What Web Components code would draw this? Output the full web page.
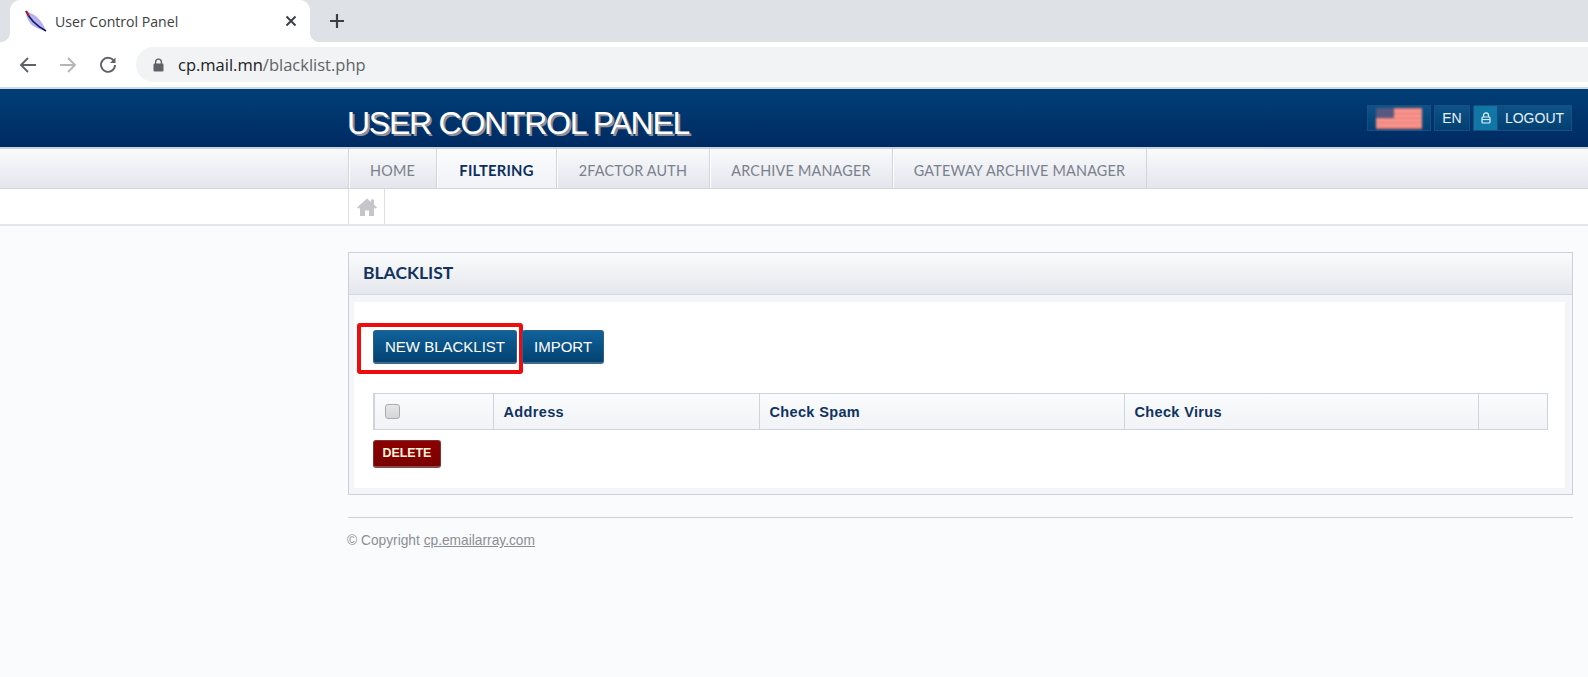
<!DOCTYPE html>
<html>
<head>
<meta charset="utf-8">
<title>User Control Panel</title>
<style>
    html, body { margin: 0; height: 100%; }
    body {
        display: flex;
        flex-direction: column;
        background: #fafbfd;
        font-family: "Liberation Sans", Arial, sans-serif;
        overflow: hidden;
    }
</style>
</head>
<body>
<browser-chrome title-text="User Control Panel" host-text="cp.mail.mn" path-text="/blacklist.php"></browser-chrome>
<cp-header></cp-header>
<cp-nav></cp-nav>
<cp-breadcrumb></cp-breadcrumb>
<cp-page>
    <cp-panel heading="BLACKLIST">
        <div style="display:flex;gap:5px;">
            <cp-button marked>NEW BLACKLIST</cp-button>
            <cp-button>IMPORT</cp-button>
        </div>
        <blacklist-table></blacklist-table>
        <cp-button danger>DELETE</cp-button>
    </cp-panel>
    <cp-footer></cp-footer>
</cp-page>

<script>
class BrowserChrome extends HTMLElement {
    constructor() {
        super();
        this.attachShadow({ mode: 'open' });
    }

    connectedCallback() {
        this.shadowRoot.innerHTML = `
            <style>
                :host {
                    display: block;
                    font-family: "Open Sans", "Noto Sans", sans-serif;
                    color: #3c4043;
                }
                .strip {
                    height: 42px;
                    background: #dee1e6;
                    display: flex;
                    padding-left: 10px;
                    box-sizing: border-box;
                }
                .tab {
                    width: 300px;
                    height: 42px;
                    background: #fff;
                    border-radius: 10px 10px 0 0;
                    display: flex;
                    align-items: center;
                    padding: 0 13px 0 15px;
                    box-sizing: border-box;
                    font-size: 14.1px;
                    position: relative;
                }
                .tab::before, .tab::after {
                    content: '';
                    position: absolute;
                    bottom: 0;
                    width: 10px;
                    height: 10px;
                }
                .tab::before {
                    left: -10px;
                    background: radial-gradient(circle at 0 0, transparent 10px, #fff 10.5px);
                }
                .tab::after {
                    right: -10px;
                    background: radial-gradient(circle at 100% 0, transparent 10px, #fff 10.5px);
                }
                .tab svg.fav { margin-right: 8px; flex: none; }
                .tab span { flex: 1; }
                .plus { margin: 13px 0 0 19px; }
                .bar {
                    height: 45px;
                    background: #fff;
                    display: flex;
                    align-items: center;
                    padding-left: 19px;
                    box-sizing: border-box;
                }
                .bar > svg { flex: none; }
                .omni {
                    flex: 1;
                    height: 35px;
                    margin-left: 19px;
                    background: #f1f3f4;
                    border-radius: 18px 0 0 18px;
                    display: flex;
                    align-items: center;
                    padding-left: 17px;
                    font-size: 16.5px;
                }
                .omni svg { margin-right: 14px; }
                .omni b { font-weight: 400; color: #202124; }
                .omni i { font-style: normal; color: #5f6368; }
                .rule { height: 2px; background: #d3dae2; }
            </style>
            <div class="strip">
                <div class="tab">
                    <svg class="fav" width="22" height="22" viewBox="0 0 22 22">
                        <path d="M1 1 C3 2 9 4 13 8 C16 11 19 15 21 21 C14 19 8 17 5 13 C2 9 1 5 1 1Z" fill="#b4b3ee"/>
                        <path d="M1 1 C4 8 10 15 21 21" stroke="#15156b" stroke-width="1.7" fill="none"/>
                        <path d="M1 1 L4 6" stroke="#b3152c" stroke-width="1.8"/>
                    </svg>
                    <span>${this.getAttribute('title-text')}</span>
                    <svg width="12" height="12" viewBox="0 0 12 12"><path d="M1.5 1.5 L10.5 10.5 M10.5 1.5 L1.5 10.5" stroke="#3c4043" stroke-width="2"/></svg>
                </div>
                <svg class="plus" width="16" height="16" viewBox="0 0 16 16"><path d="M8 1 V15 M1 8 H15" stroke="#3c4043" stroke-width="2.2"/></svg>
            </div>
            <div class="bar">
                <svg width="18" height="18" viewBox="0 0 18 18"><path d="M17 9 H2 M9 2 L2 9 L9 16" stroke="#5f6368" stroke-width="1.9" fill="none"/></svg>
                <svg style="margin-left:22px" width="18" height="18" viewBox="0 0 18 18"><path d="M1 9 H16 M9 2 L16 9 L9 16" stroke="#b4b6b9" stroke-width="1.9" fill="none"/></svg>
                <svg style="margin-left:22px" width="18" height="18" viewBox="0 0 18 18"><path d="M15 5.2 A7 7 0 1 0 16 9" stroke="#5f6368" stroke-width="1.9" fill="none"/><path d="M16.5 1.5 V7 H11Z" fill="#5f6368"/></svg>
                <div class="omni">
                    <svg width="11" height="14" viewBox="0 0 11 14"><path d="M2.6 6 V4 A2.9 2.9 0 0 1 8.4 4 V6" stroke="#5f6368" stroke-width="1.4" fill="none"/><rect x="0.5" y="5.5" width="10" height="8" rx="1.2" fill="#5f6368"/></svg>
                    <b>${this.getAttribute('host-text')}</b><i>${this.getAttribute('path-text')}</i>
                </div>
            </div>
            <div class="rule"></div>
        `;
    }
}

class CpHeader extends HTMLElement {
    constructor() {
        super();
        this.attachShadow({ mode: 'open' });
        this.shadowRoot.innerHTML = `
            <style>
                :host {
                    display: block;
                    height: 58px;
                    background: linear-gradient(#003f76, #002a62);
                    color: #fff;
                    font-family: "Liberation Sans", Arial, sans-serif;
                    position: relative;
                    border-bottom: 2px solid #c9d2dd;
                }
                .title {
                    position: absolute;
                    left: 347px;
                    top: 15px;
                    font-size: 32px;
                    line-height: 38px;
                    letter-spacing: -1.25px;
                    text-shadow: 2px 2px 0 #8f9099;
                    white-space: nowrap;
                }
                .tools {
                    position: absolute;
                    right: 16px;
                    top: 16px;
                    display: flex;
                    gap: 3px;
                    font-size: 14px;
                }
                .tool {
                    height: 26px;
                    box-sizing: border-box;
                    padding-bottom: 1px;
                    border: 1px solid #174f83;
                    background: linear-gradient(#0d5288, #034071);
                    display: flex;
                    align-items: center;
                    justify-content: center;
                    color: #e8f1f8;
                }
                .flag { width: 64px; padding-bottom: 0; }
                .flag svg { filter: blur(1.1px); }
                .en { width: 36px; }
                .logout { display: flex; width: 99px; padding-bottom: 0; }
                .logout .lock {
                    width: 23px;
                    height: 100%;
                    background: #0f76a6;
                    display: flex;
                    align-items: center;
                    justify-content: center;
                    border-right: 1px solid #174f83;
                }
                .logout span { flex: 1; text-align: center; padding-bottom: 1px; }
            </style>
            <div class="title">USER CONTROL PANEL</div>
            <div class="tools">
                <div class="tool flag">
                    <svg width="46" height="21" viewBox="0 0 46 21">
                        <rect width="46" height="21" fill="#f4837c"/>
                        <path d="M0 3.5 H46 M0 8 H46 M0 12.5 H46 M0 17 H46" stroke="#f3a89f" stroke-width="1.4"/>
                        <rect width="18" height="10" fill="#57587f"/>
                    </svg>
                </div>
                <div class="tool en">EN</div>
                <div class="tool logout">
                    <div class="lock">
                        <svg width="10" height="12" viewBox="0 0 10 12"><path d="M2.5 5 V3.4 A2.5 2.5 0 0 1 7.5 3.4 V5" stroke="#e3f2fa" stroke-width="1.2" fill="none"/><rect x="1" y="5" width="8" height="6" rx="1" fill="none" stroke="#e3f2fa" stroke-width="1.2"/><path d="M1 7.6 H9" stroke="#e3f2fa"/></svg>
                    </div>
                    <span>LOGOUT</span>
                </div>
            </div>
        `;
    }
}

class CpNav extends HTMLElement {
    constructor() {
        super();
        this.attachShadow({ mode: 'open' });
        const items = [
            ['HOME', 88], ['FILTERING', 120], ['2FACTOR AUTH', 153],
            ['ARCHIVE MANAGER', 183], ['GATEWAY ARCHIVE MANAGER', 255]
        ];
        this.shadowRoot.innerHTML = `
            <style>
                :host {
                    display: flex;
                    height: 39px;
                    padding-left: 348px;
                    background: linear-gradient(#f9fafc, #e3e6ec);
                    border-bottom: 1px solid #cfd6df;
                    font-family: Lato, "Open Sans", sans-serif;
                    font-size: 14.4px;
                    color: #7b808c;
                }
                a {
                    display: flex;
                    align-items: center;
                    justify-content: center;
                    box-sizing: border-box;
                    padding-top: 3px;
                    border-left: 1px solid #cfd6df;
                    box-shadow: inset 1px 0 0 #fff;
                    letter-spacing: 0.2px;
                    white-space: nowrap;
                }
                a:last-child { border-right: 1px solid #cfd6df; }
                a.on {
                    color: #0d2f5e;
                    font-weight: 700;
                    font-size: 14.8px;
                    background: linear-gradient(#fbfcfd, #f0f2f6);
                }
            </style>
            ${items.map(([label, w]) => `<a class="${label === 'FILTERING' ? 'on' : ''}" style="width:${w}px">${label}</a>`).join('')}
        `;
    }
}

class CpBreadcrumb extends HTMLElement {
    constructor() {
        super();
        this.attachShadow({ mode: 'open' });
        this.shadowRoot.innerHTML = `
            <style>
                :host {
                    display: flex;
                    height: 35px;
                    padding-left: 348px;
                    background: #fff;
                    border-bottom: 2px solid #e3e6ec;
                }
                div {
                    width: 37px;
                    box-sizing: border-box;
                    border-left: 1px solid #dcdfe5;
                    border-right: 1px solid #dcdfe5;
                    display: flex;
                    align-items: center;
                    justify-content: center;
                }
            </style>
            <div>
                <svg width="20" height="18" viewBox="0 0 20 18">
                    <path d="M10 .5 L14 4 V1.5 H17 V6.6 L20 9.4 L18.6 10.8 L17 9.4 V18 H12 V12.5 H8 V18 H3 V9.4 L1.4 10.8 L0 9.4Z" fill="#c4c6c9"/>
                </svg>
            </div>
        `;
    }
}

class CpPage extends HTMLElement {
    constructor() {
        super();
        this.attachShadow({ mode: 'open' });
        this.shadowRoot.innerHTML = `
            <style>
                :host {
                    display: block;
                    padding: 26px 15px 0 348px;
                }
            </style>
            <slot></slot>
        `;
    }
}

class CpPanel extends HTMLElement {
    constructor() {
        super();
        this.attachShadow({ mode: 'open' });
    }

    connectedCallback() {
        this.shadowRoot.innerHTML = `
            <style>
                :host {
                    display: block;
                    border: 1px solid #c9d0da;
                    background: #f3f5f9;
                    height: 243px;
                    box-sizing: border-box;
                }
                h2 {
                    margin: 0;
                    height: 42px;
                    box-sizing: border-box;
                    padding: 0 0 3px 14px;
                    display: flex;
                    align-items: center;
                    background: linear-gradient(#fafbfc, #e4e7ec);
                    border-bottom: 1px solid #d5dae2;
                    font: 700 17.5px Lato, "Open Sans", sans-serif;
                    color: #12335f;
                }
                .body {
                    margin: 7px 7px 0 5px;
                    height: 186px;
                    box-sizing: border-box;
                    background: #fff;
                    padding: 28px 17px 0 19px;
                }
            </style>
            <h2>${this.getAttribute('heading')}</h2>
            <div class="body"><slot></slot></div>
        `;
    }
}

class CpButton extends HTMLElement {
    constructor() {
        super();
        this.attachShadow({ mode: 'open' });
    }

    connectedCallback() {
        const marked = this.hasAttribute('marked');
        this.shadowRoot.innerHTML = `
            <style>
                :host {
                    display: inline-block;
                    position: relative;
                    vertical-align: top;
                }
                button {
                    display: block;
                    height: 34px;
                    padding: 0 11px;
                    border: 1px solid #2f5f86;
                    border-bottom: 2px solid #3d6a8d;
                    border-radius: 3px;
                    background: linear-gradient(#10629b, #034271);
                    color: #fff;
                    font: 15px "Liberation Sans", Arial, sans-serif;
                    white-space: nowrap;
                }
                :host([danger]) button {
                    height: 28px;
                    padding: 0 8.5px 2px;
                    border-color: #7d3434;
                    border-bottom-color: #8b4a4a;
                    background: linear-gradient(#8c0000, #7b0000);
                    font-size: 12.4px;
                    font-weight: 700;
                    color: #fff3dc;
                }
                .mark {
                    position: absolute;
                    left: -16px;
                    top: -7px;
                    width: 166px;
                    height: 51px;
                    box-sizing: border-box;
                    border: 4px solid #ee0c0f;
                    border-radius: 3px;
                }
            </style>
            <button><slot></slot></button>
            ${marked ? '<div class="mark"></div>' : ''}
        `;
    }
}

class BlacklistTable extends HTMLElement {
    constructor() {
        super();
        this.attachShadow({ mode: 'open' });
        this.shadowRoot.innerHTML = `
            <style>
                :host {
                    display: grid;
                    grid-template-columns: 119px 266px 365px 354px 1fr;
                    height: 37px;
                    margin: 29px 0 10px;
                    box-sizing: border-box;
                    border: 1px solid #cfd4dc;
                    background: linear-gradient(#fafbfc, #f1f3f7);
                    font: 700 14.5px "Liberation Sans", Arial, sans-serif;
                    letter-spacing: 0.35px;
                    color: #0f3360;
                }
                div {
                    display: flex;
                    align-items: center;
                    padding-left: 9.5px;
                    border-left: 1px solid #cfd4dc;
                }
                div:first-child { border-left: 0; padding: 0 0 7px 10px; }
                i {
                    width: 13px;
                    height: 13px;
                    border: 1px solid #a9abae;
                    border-radius: 3px;
                    background: linear-gradient(#e6e6e6, #d6d6d6);
                }
            </style>
            <div><i></i></div>
            <div>Address</div>
            <div>Check Spam</div>
            <div>Check Virus</div>
            <div></div>
        `;
    }
}

class CpFooter extends HTMLElement {
    constructor() {
        super();
        this.attachShadow({ mode: 'open' });
        this.shadowRoot.innerHTML = `
            <style>
                :host {
                    display: block;
                    margin-top: 22px;
                    border-top: 1px solid #c9d3df;
                    padding-top: 15px;
                    font: 13.75px/16px "Liberation Sans", Arial, sans-serif;
                    color: #8c8f94;
                    text-indent: -1px;
                }
                a { color: inherit; text-decoration: underline; }
            </style>
            © Copyright <a>cp.emailarray.com</a>
        `;
    }
}

customElements.define('browser-chrome', BrowserChrome);
customElements.define('cp-header', CpHeader);
customElements.define('cp-nav', CpNav);
customElements.define('cp-breadcrumb', CpBreadcrumb);
customElements.define('cp-page', CpPage);
customElements.define('cp-panel', CpPanel);
customElements.define('cp-button', CpButton);
customElements.define('blacklist-table', BlacklistTable);
customElements.define('cp-footer', CpFooter);
</script>
</body>
</html>
